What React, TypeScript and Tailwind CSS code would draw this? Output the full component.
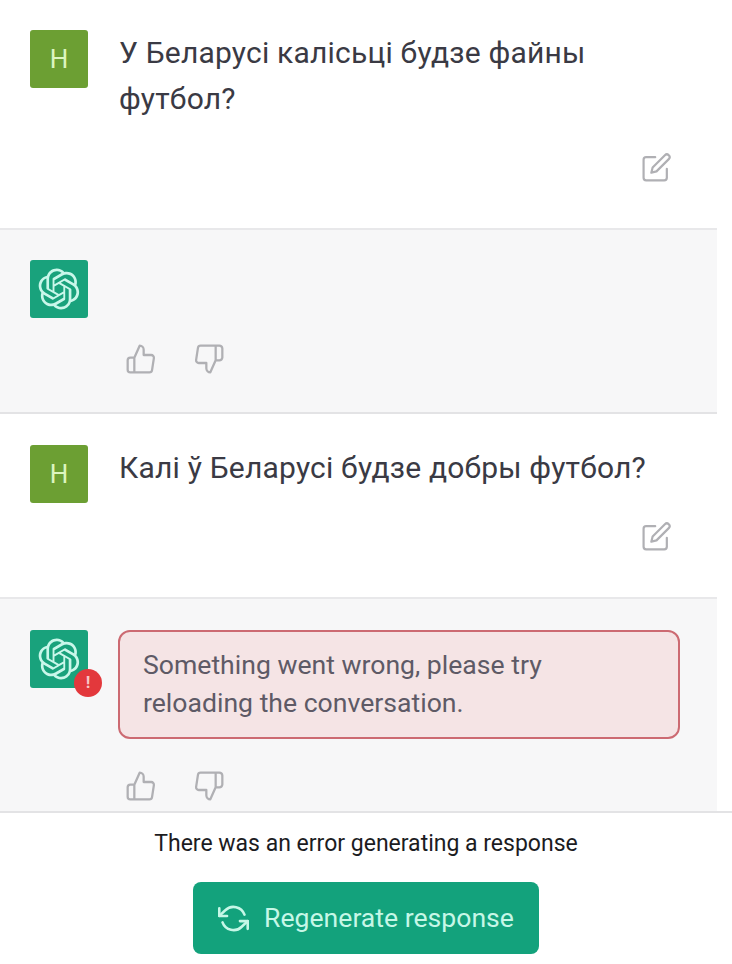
import React from 'react';

const GPT_PATH =
  'M37.5324 16.8707C37.9808 15.5241 38.1363 14.0974 37.9886 12.6859C37.8409 11.2744 37.3934 9.91076 36.676 8.68622C35.6126 6.83404 33.9882 5.3676 32.0373 4.4985C30.0864 3.62941 27.9098 3.40259 25.8215 3.85078C24.8796 2.7893 23.7219 1.94125 22.4257 1.36341C21.1295 0.785575 19.7249 0.491269 18.3058 0.500197C16.1708 0.495044 14.0893 1.16803 12.3614 2.42214C10.6335 3.67624 9.34853 5.44666 8.6917 7.47815C7.30085 7.76286 5.98686 8.3414 4.8377 9.17505C3.68854 10.0087 2.73073 11.0782 2.02839 12.312C0.956464 14.1591 0.498905 16.2988 0.721698 18.4228C0.944492 20.5467 1.83612 22.5449 3.268 24.1293C2.81966 25.4759 2.66413 26.9026 2.81182 28.3141C2.95951 29.7256 3.40701 31.0892 4.12437 32.3138C5.18791 34.1659 6.8123 35.6322 8.76321 36.5013C10.7141 37.3704 12.8907 37.5973 14.9789 37.1492C15.9208 38.2107 17.0786 39.0587 18.3747 39.6366C19.6709 40.2144 21.0755 40.5087 22.4946 40.4998C24.6307 40.5054 26.7133 39.8321 28.4418 38.5772C30.1704 37.3223 31.4556 35.5506 32.1119 33.5179C33.5027 33.2332 34.8167 32.6547 35.9659 31.821C37.115 30.9874 38.0728 29.9178 38.7752 28.684C39.8458 26.8371 40.3023 24.6979 40.0789 22.5748C39.8556 20.4517 38.9639 18.4544 37.5324 16.8707ZM22.4978 37.8849C20.7443 37.8874 19.0459 37.2733 17.6994 36.1501C17.7601 36.117 17.8666 36.0586 17.936 36.0161L25.9004 31.4156C26.1003 31.3019 26.2663 31.137 26.3813 30.9378C26.4964 30.7386 26.5563 30.5124 26.5549 30.2825V19.0542L29.9213 20.998C29.9389 21.0068 29.9541 21.0198 29.9656 21.0359C29.977 21.052 29.9842 21.0707 29.9867 21.0902V30.3889C29.9842 32.375 29.1946 34.2791 27.7909 35.6841C26.3872 37.0892 24.4838 37.8806 22.4978 37.8849ZM6.39227 31.0064C5.51397 29.4888 5.19742 27.7107 5.49804 25.9832C5.55718 26.0187 5.66048 26.0818 5.73461 26.1244L13.699 30.7248C13.8975 30.8408 14.1233 30.902 14.3532 30.902C14.583 30.902 14.8088 30.8408 15.0073 30.7248L24.731 25.1103V28.9979C24.7321 29.0177 24.7283 29.0376 24.7199 29.0556C24.7115 29.0736 24.6988 29.0893 24.6829 29.1012L16.6317 33.7497C14.9096 34.7416 12.8643 35.0097 10.9447 34.4954C9.02506 33.9811 7.38785 32.7263 6.39227 31.0064ZM4.29707 13.6194C5.17156 12.0998 6.55279 10.9364 8.19885 10.3327C8.19885 10.4013 8.19491 10.5228 8.19491 10.6071V19.808C8.19351 20.0378 8.25334 20.2638 8.36823 20.4629C8.48312 20.6619 8.64893 20.8267 8.84863 20.9404L18.5723 26.5542L15.206 28.4979C15.1894 28.5089 15.1703 28.5155 15.1505 28.5173C15.1307 28.5191 15.1107 28.516 15.0924 28.5082L7.04025 23.8557C5.32111 22.8601 4.06702 21.2235 3.55294 19.3046C3.03886 17.3858 3.30665 15.3413 4.29707 13.6194ZM31.955 20.0556L22.2312 14.4411L25.5976 12.4981C25.6142 12.4872 25.6333 12.4805 25.6531 12.4787C25.6729 12.4769 25.6928 12.4801 25.7111 12.4879L33.7632 17.1364C34.9967 17.849 36.0017 18.8982 36.6606 20.1613C37.3194 21.4244 37.6047 22.849 37.4832 24.2684C37.3617 25.6878 36.8382 27.0432 35.9743 28.1759C35.1103 29.3086 33.9415 30.1717 32.6047 30.6641C32.6047 30.5947 32.6047 30.4733 32.6047 30.3889V21.188C32.6066 20.9586 32.5474 20.7328 32.4332 20.5338C32.319 20.3348 32.154 20.1698 31.955 20.0556ZM35.3055 15.0128C35.2464 14.9765 35.1431 14.9142 35.069 14.8717L27.1045 10.2712C26.906 10.1554 26.6803 10.0943 26.4504 10.0943C26.2206 10.0943 25.9948 10.1554 25.7963 10.2712L16.0726 15.8858V11.9982C16.0715 11.9783 16.0753 11.9585 16.0837 11.9405C16.0921 11.9225 16.1048 11.9068 16.1207 11.8949L24.1719 7.25025C25.4053 6.53903 26.8158 6.19376 28.2383 6.25482C29.6608 6.31589 31.0364 6.78077 32.2044 7.59508C33.3723 8.40939 34.2842 9.53945 34.8334 10.8531C35.3826 12.1667 35.5464 13.6095 35.3055 15.0128ZM14.2424 21.9419L10.8752 19.9981C10.8576 19.9893 10.8423 19.9763 10.8309 19.9602C10.8195 19.9441 10.8122 19.9254 10.8098 19.9058V10.6071C10.8107 9.18295 11.2173 7.78848 11.9819 6.58696C12.7466 5.38544 13.8377 4.42659 15.1275 3.82264C16.4173 3.21869 17.8524 2.99464 19.2649 3.1767C20.6775 3.35876 22.0089 3.93941 23.1034 4.85067C23.0427 4.88379 22.937 4.94215 22.8668 4.98473L14.9024 9.58517C14.7025 9.69878 14.5366 9.86356 14.4215 10.0626C14.3065 10.2616 14.2466 10.4877 14.2479 10.7175L14.2424 21.9419ZM16.071 17.9991L20.4018 15.4978L24.7325 17.9975V22.9985L20.4018 25.4983L16.071 22.9985V17.9991Z';

function Icon({ className, children }: { className: string; children: React.ReactNode }) {
  return (
    <svg viewBox="0 0 24 24" className={className} fill="none" stroke="currentColor" strokeWidth="1.7" strokeLinecap="round" strokeLinejoin="round">
      {children}
    </svg>
  );
}

function UserAvatar() {
  return (
    <div className="flex h-[58px] w-[58px] shrink-0 items-center justify-center rounded-[3px] bg-[#6c9f33] text-[26px] text-[#dcf5c0]">
      H
    </div>
  );
}

function GptAvatar({ error }: { error?: boolean }) {
  return (
    <div className="relative flex h-[58px] w-[58px] shrink-0 items-center justify-center rounded-[3px] bg-[#19a27c] text-[#c9f7ea]">
      <svg viewBox="0 0 41 41" className="h-[42px] w-[42px]" fill="currentColor">
        <path d={GPT_PATH} />
      </svg>
      {error && (
        <div className="absolute -bottom-[9px] -right-[14px] flex h-7 w-7 items-center justify-center rounded-full bg-[#e3383c] text-[17px] font-bold text-[#f7c7c7]">
          !
        </div>
      )}
    </div>
  );
}

function Votes() {
  return (
    <div className="ml-[95px] flex gap-[36px] text-[#b0b0b4]">
      <Icon className="h-[32px] w-[32px]">
        <path d="M14 9V5a3 3 0 0 0-3-3l-4 9v11h11.28a2 2 0 0 0 2-1.7l1.38-9a2 2 0 0 0-2-2.3zM7 22H4a2 2 0 0 1-2-2v-7a2 2 0 0 1 2-2h3" />
      </Icon>
      <Icon className="h-[32px] w-[32px]">
        <path d="M10 15v4a3 3 0 0 0 3 3l4-9V2H5.72a2 2 0 0 0-2 1.7l-1.38 9a2 2 0 0 0 2 2.3zm7-13h2.67A2.31 2.31 0 0 1 22 4v7a2.31 2.31 0 0 1-2.33 2H17" />
      </Icon>
    </div>
  );
}

function UserMessage({ text, heightClass, topClass }: { text: string; heightClass: string; topClass: string }) {
  return (
    <div className={`flex flex-col justify-between border-b-2 border-[#e8e8ea] bg-white pl-[30px] pr-[45px] ${topClass} ${heightClass}`}>
      <div className="flex gap-[31px]">
        <UserAvatar />
        <p className="flex-1 pr-[2px] text-[30px] leading-[46px] tracking-[0.2px] text-[#3a3a44]">{text}</p>
      </div>
      <div className="mb-[45px] flex justify-end text-[#b0b0b4]">
        <Icon className="h-[31px] w-[31px]">
          <path d="M11 4H4a2 2 0 0 0-2 2v14a2 2 0 0 0 2 2h14a2 2 0 0 0 2-2v-7" />
          <path d="M18.5 2.5a2.121 2.121 0 0 1 3 3L12 15l-4 1 1-4 9.5-9.5z" />
        </Icon>
      </div>
    </div>
  );
}

export default function App() {
  return (
    <div className="flex h-[964px] w-[732px] flex-col overflow-hidden bg-white font-['Roboto',sans-serif]">
      <div className="w-[717px]">
        <UserMessage text="У Беларусі калісьці будзе файны футбол?" heightClass="h-[230px]" topClass="pt-[30px]" />
        <div className="h-[184px] border-b-2 border-[#e3e3e5] bg-[#f7f7f8] pl-[30px] pt-[30px]">
          <GptAvatar />
          <div className="mt-[25px]">
            <Votes />
          </div>
        </div>
        <UserMessage text="Калі ў Беларусі будзе добры футбол?" heightClass="h-[185px]" topClass="pt-[31px]" />
        <div className="h-[212px] bg-[#f7f7f8] pl-[30px] pr-[37px] pt-[31px]">
          <div className="flex gap-[30px]">
            <GptAvatar error />
            <div className="h-[109px] flex-1 rounded-[12px] border-2 border-[#cc6a72] bg-[#f5e4e5] py-[14px] pl-[23px] pr-8 text-[26.6px] leading-[38px] text-[#5e5a66]">
              Something went wrong, please try reloading the conversation.
            </div>
          </div>
          <div className="mt-[31px]">
            <Votes />
          </div>
        </div>
      </div>
      <div className="flex flex-1 flex-col items-center border-t-2 border-[#e3e3e5] bg-white">
        <p className="mt-[15px] text-[23px] leading-[32px] text-[#1c1c1f]">There was an error generating a response</p>
        <button className="mt-[22px] flex h-[72px] w-[346px] items-center justify-center gap-[15px] rounded-[8px] bg-[#13a27c] text-[26.6px] text-[#c6f7e7]">
          <svg viewBox="0 0 24 24" className="h-[31px] w-[31px]" fill="none" stroke="currentColor" strokeWidth="2" strokeLinecap="round" strokeLinejoin="round">
            <polyline points="1 4 1 10 7 10" />
            <polyline points="23 20 23 14 17 14" />
            <path d="M20.49 9A9 9 0 0 0 5.64 5.64L1 10m22 4l-4.64 4.36A9 9 0 0 1 3.51 15" />
          </svg>
          Regenerate response
        </button>
      </div>
    </div>
  );
}
